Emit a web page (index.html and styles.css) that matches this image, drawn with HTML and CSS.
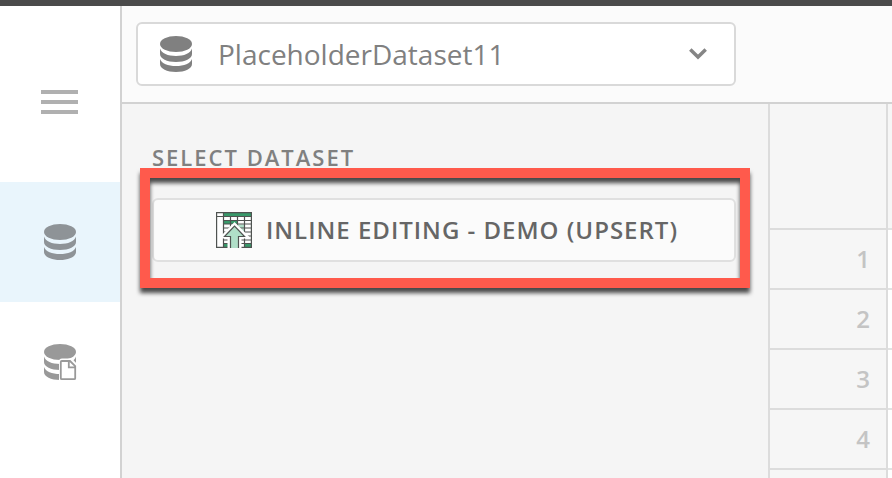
FILE: index.html
```html
<!DOCTYPE html>
<html lang="en">
<head>
<meta charset="utf-8">
<title>Datasets</title>
<link rel="stylesheet" href="styles.css">
</head>
<body>
<svg class="defs" width="0" height="0" aria-hidden="true">
  <symbol id="db" viewBox="0 0 32 36">
    <ellipse cx="16" cy="8" rx="16" ry="8"/>
    <path d="M0 12.5C1.5 17.3 8 20 16 20S30.500 17.300 32 12.500V18C32 22.500 25 26 16 26S0 22.500 0 18Z"/>
    <path d="M0 23C1.500 27.500 8 30 16 30S30.500 27.500 32 23V28C32 32.500 25 36 16 36S0 32.500 0 28Z"/>
  </symbol>
</svg>
<div class="topbar"></div>
<div class="app">
  <nav class="sidebar">
    <div class="menu"><span></span><span></span><span></span></div>
    <div class="nav-item active"><svg class="db" width="32" height="36"><use href="#db"/></svg></div>
    <div class="nav-item file">
      <svg class="db" width="33" height="37" viewBox="0 0 33 37">
        <svg width="32" height="36"><use href="#db"/></svg>
        <path class="knock" d="M15 37V17.500Q15 14.500 18 14.500H28L33 20V37Z"/>
        <path class="sheet" d="M17.800 17H26L31.200 22.200V34.200Q31.200 35.200 30.200 35.200H17.800Q16.800 35.200 16.800 34.200V18Q16.800 17 17.800 17ZM24.800 17V23.300H31.200"/>
      </svg>
    </div>
  </nav>
  <main class="main">
    <header class="header">
      <div class="select">
        <svg class="db" width="32" height="36"><use href="#db"/></svg>
        <span class="select-name">PlaceholderDataset11</span>
        <svg class="chevron" width="18" height="12" viewBox="0 0 18 12"><path d="M1.300 1.500L9 9L16.700 1.500"/></svg>
      </div>
    </header>
    <div class="content">
      <section class="panel">
        <h2 class="title">SELECT DATASET</h2>
        <div class="dataset">
          <svg width="36" height="36" viewBox="0 0 36 36">
            <path fill="#fff" d="M0 0H36V36H0Z"/>
            <path fill="#38996a" d="M7 1H35V4.500H7ZM8 8.500H14V12H8ZM15 8.500H21V12H15ZM8 31H13V35H8ZM29 31H35V35H29Z"/>
            <path fill="#b0dfc8" d="M22 12.500H28V16H22ZM22 16.500H28V20H22Z"/>
            <path class="lines" d="M.6 .6H35.400V35.400H.6ZM7.500 .6V35.400M0 4.500H36M7 8.500H36M7 12H36M7 16H36M7 20H36M7 24H36M7 28H36M7 31.500H36M14.500 4V36M21.500 4V36M28.500 4V36"/>
            <path fill="#fff" d="M18.500 10L33 24.500V26.500H25.500V36H11.500V26.500H4.500V24.500Z"/>
            <path class="arrow" d="M14.500 36V24.500H8.500L18.500 14L28.500 24.500H22.500V36"/>
          </svg>
          <span class="dataset-name">INLINE EDITING - DEMO (UPSERT)</span>
        </div>
        <div class="highlight"></div>
      </section>
      <div class="table">
        <div class="corner"></div><div class="cell head"></div>
        <div class="num">1</div><div class="cell"></div>
        <div class="num">2</div><div class="cell"></div>
        <div class="num">3</div><div class="cell"></div>
        <div class="num">4</div><div class="cell"></div>
        <div class="num"></div><div class="cell"></div>
      </div>
    </div>
  </main>
</div>
</body>
</html>
```
FILE: styles.css
```css
* { box-sizing: border-box; }
body { margin: 0; height: 478px; overflow: hidden; background: #fff; font-family: "Open Sans", sans-serif; }
.defs { position: absolute; }
.topbar { height: 6px; background: #4b4b4b; }
.app { display: flex; height: 472px; }
.sidebar { width: 122px; flex: none; border-right: 2px solid #d2d2d2; background: #fff; }
.menu { height: 176px; padding: 84px 0 0 41px; display: flex; flex-direction: column; gap: 6px; }
.menu span { width: 37px; height: 4px; background: #b0b0b0; }
.nav-item { height: 120px; padding: 42px 0 0 44px; }
.active { background: #e9f5fc; }
.db { display: block; flex: none; fill: #808080; }
.active .db { fill: #8e9397; }
.file .db { fill: #999; }
.file .knock { fill: #fff; }
.file .sheet { fill: #fff; stroke: #999; stroke-width: 1.800; }
.main { flex: 1; min-width: 0; display: flex; flex-direction: column; }
.header { height: 98px; flex: none; padding: 16px 14px; background: #fbfbfb; border-bottom: 2px solid #d2d2d2; }
.select { width: 600px; height: 64px; display: flex; align-items: center; padding: 0 27px 0 22px; border: 2px solid #d9d9d9; border-radius: 6px; background: #fff; }
.select-name { flex: 1; margin-left: 26px; font-size: 28px; line-height: 38px; color: #808080; white-space: nowrap; }
.chevron { fill: none; stroke: #858585; stroke-width: 3.500; }
.content { flex: 1; min-height: 0; display: flex; overflow: hidden; }
.panel { position: relative; width: 648px; flex: none; padding: 38px 32px 0 30px; background: #f5f5f5; border-right: 2px solid #dcdcdc; }
.title { margin: 0; height: 56px; font-size: 22px; line-height: 30px; font-weight: 600; letter-spacing: 2px; color: #808080; white-space: nowrap; }
.dataset { width: 584px; height: 64px; display: flex; align-items: center; padding-left: 62px; border: 2px solid #e0e0e0; border-radius: 6px; background: #fbfbfb; }
.dataset-name { margin-left: 14px; padding-bottom: 2px; font-size: 24px; font-weight: 600; letter-spacing: 1px; color: #666; white-space: nowrap; }
.lines { fill: none; stroke: #4f5351; stroke-width: 1.200; }
.arrow { fill: #b0dfc8; stroke: #4f5351; stroke-width: 1.200; }
.highlight { position: absolute; left: 18px; top: 64px; width: 610px; height: 120px; border: 10px solid #ff5a4c; filter: drop-shadow(0 5px 2px rgba(0, 0, 0, .7)); }
.table { flex: 1; display: grid; grid-template-columns: 118px 1fr; grid-template-rows: 126px; grid-auto-rows: 60px; }
.corner, .num { background: #f6f6f6; border-right: 2px solid #dcdcdc; border-bottom: 2px solid #dcdcdc; }
.num { padding-right: 16px; text-align: right; font-size: 24px; line-height: 58px; font-weight: 600; color: #c4c4c4; }
.cell { background: #fff; border-bottom: 2px solid #e2e2e2; }
.head { background: #f6f6f6; }
```
